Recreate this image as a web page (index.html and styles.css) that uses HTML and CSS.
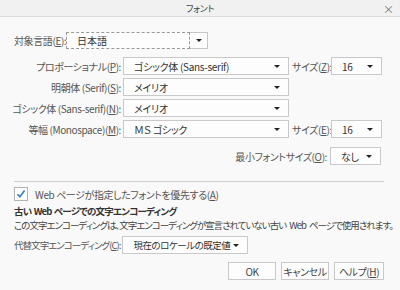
FILE: index.html
```html
<!DOCTYPE html>
<html lang="ja">
<head>
    <meta charset="UTF-8">
    <title>フォント</title>
    <link rel="stylesheet" href="styles.css">
</head>
<body>

<div class="dialog">
    <div class="titlebar">
        <span class="title">フォント</span>
        <span class="close">&#215;</span>
    </div>

    <div class="content">
        <div class="lang-row">
            <span class="label">対象言語(<u>E</u>):</span>
            <div class="lang-select">日本語</div>
            <div class="lang-button"><span class="arrow"></span></div>
        </div>

        <div class="font-grid">
            <span class="label right">プロポーショナル(<u>P</u>):</span>
            <div class="select wide"><span>ゴシック体 (Sans-serif)</span><span class="arrow"></span></div>
            <span class="label size-label">サイズ(<u>Z</u>):</span>
            <div class="select small"><span>16</span><span class="arrow"></span></div>

            <span class="label right">明朝体 (Serif)(<u>S</u>):</span>
            <div class="select wide"><span>メイリオ</span><span class="arrow"></span></div>
            <span></span><span></span>

            <span class="label right">ゴシック体 (Sans-serif)(<u>N</u>):</span>
            <div class="select wide"><span>メイリオ</span><span class="arrow"></span></div>
            <span></span><span></span>

            <span class="label right">等幅 (Monospace)(<u>M</u>):</span>
            <div class="select wide"><span>ＭＳ ゴシック</span><span class="arrow"></span></div>
            <span class="label size-label">サイズ(<u>E</u>):</span>
            <div class="select small"><span>16</span><span class="arrow"></span></div>
        </div>

        <div class="min-row">
            <span class="label">最小フォントサイズ(<u>O</u>):</span>
            <div class="select small"><span>なし</span><span class="arrow"></span></div>
        </div>

        <hr class="separator">

        <div class="check-row">
            <span class="checkbox">
                <svg width="14" height="14" viewBox="0 0 14 14">
                    <rect x="0.5" y="0.5" width="13" height="13" fill="#fff" stroke="#b4b4b4"/>
                    <path d="M3.5 7.2 L5.9 9.8 L10.6 3.6" fill="none" stroke="#2d7fd3" stroke-width="1.6"/>
                </svg>
            </span>
            <span class="label">Web ページが指定したフォントを優先する(<u>A</u>)</span>
        </div>

        <div class="heading">古い Web ページでの文字エンコーディング</div>
        <div class="desc">この文字エンコーディングは、文字エンコーディングが宣言されていない古い Web ページで使用されます。</div>

        <div class="enc-row">
            <span class="label">代替文字エンコーディング(<u>C</u>):</span>
            <div class="select enc"><span>現在のロケールの既定値</span><span class="arrow"></span></div>
        </div>

        <div class="buttons">
            <button class="ok">OK</button>
            <button class="cancel">キャンセル</button>
            <button class="help">ヘルプ(<u>H</u>)</button>
        </div>
    </div>
</div>

</body>
</html>
```

FILE: styles.css
```css
/* Global */
* {
    box-sizing: border-box;
    margin: 0;
    padding: 0;
}
body {
    width: 400px;
    height: 290px;
    background-color: #f9f9f9;
    color: #555;
    font-family: "Noto Sans CJK JP", sans-serif;
    font-size: 10px;
    font-feature-settings: "palt";
    overflow: hidden;
}
u {
    text-decoration: underline;
}

/* Title bar */
.titlebar {
    height: 17px;
    background-color: #f1f1f1;
    border-bottom: 1px solid #d9d9d9;
    display: flex;
    justify-content: center;
    align-items: center;
    position: relative;
}
.title {
    font-size: 9px;
    color: #444;
    letter-spacing: -0.3px;
}
.close {
    position: absolute;
    right: 6px;
    top: 1px;
    font-size: 11px;
    color: #777;
}

/* Content */
.content {
    padding: 15px 16px 0 14px;
}
.label {
    white-space: nowrap;
    letter-spacing: -0.4px;
}
.right {
    justify-self: end;
}
.arrow {
    flex: none;
    width: 0;
    height: 0;
    border-left: 3px solid transparent;
    border-right: 3px solid transparent;
    border-top: 3px solid #222;
}

/* Language row */
.lang-row {
    display: flex;
    align-items: center;
    height: 17px;
}
.lang-row .label {
    width: 52px;
}
.lang-select {
    width: 124px;
    height: 17px;
    border: 1px dashed #999;
    background-color: #fdfdfd;
    color: #333;
    padding-left: 10px;
    line-height: 15px;
}
.lang-button {
    width: 18px;
    height: 17px;
    border: 1px solid #c6c6c6;
    border-left: none;
    background-color: #fdfdfd;
    display: flex;
    justify-content: center;
    align-items: center;
}

/* Select boxes */
.select {
    height: 18px;
    border: 1px solid #c9c9c9;
    background-color: #fdfdfd;
    color: #333;
    display: flex;
    justify-content: space-between;
    align-items: center;
    padding: 0 8px 0 10px;
    white-space: nowrap;
    letter-spacing: -0.3px;
}
.wide {
    width: 166px;
}
.small {
    width: 51px;
}
.enc {
    width: 126px;
    font-size: 9.5px;
    letter-spacing: -0.5px;
}

/* Font grid */
.font-grid {
    display: grid;
    grid-template-columns: 107px 166px 38px 51px;
    column-gap: 2px;
    row-gap: 3px;
    align-items: center;
    margin-top: 8px;
}
.font-grid .size-label {
    margin-left: 1px;
}

/* Min font size */
.min-row {
    display: flex;
    justify-content: flex-end;
    align-items: center;
    gap: 3px;
    width: 367px;
    margin-top: 9px;
}

.separator {
    border: none;
    border-top: 1px solid #cfcfcf;
    width: 370px;
    margin-top: 16px;
}

/* Checkbox */
.check-row {
    display: flex;
    align-items: center;
    gap: 7px;
    margin-top: 5px;
    height: 14px;
}
.checkbox svg {
    display: block;
}

.heading {
    font-size: 9.5px;
    font-weight: bold;
    color: #333;
    margin-top: 4px;
    line-height: 13px;
    letter-spacing: -0.8px;
    word-spacing: 1px;
}
.desc {
    font-size: 9.5px;
    line-height: 14px;
    color: #444;
    letter-spacing: -1px;
    word-spacing: 2px;
    white-space: nowrap;
}

/* Encoding */
.enc-row {
    display: flex;
    align-items: center;
    gap: 2px;
    margin-top: 4px;
}
.enc-row .label {
    font-size: 9.5px;
    letter-spacing: -0.95px;
}

/* Buttons */
.buttons {
    display: flex;
    justify-content: flex-end;
    gap: 5px;
    width: 370px;
    margin-top: 8px;
}
button {
    height: 18px;
    background-color: #fdfdfd;
    border: 1px solid #c9c9c9;
    font-family: inherit;
    font-size: 10px;
    font-feature-settings: "palt";
    letter-spacing: -0.4px;
    color: #444;
    white-space: nowrap;
}
.ok {
    width: 48px;
}
.cancel {
    width: 48px;
}
.help {
    width: 50px;
}
```
